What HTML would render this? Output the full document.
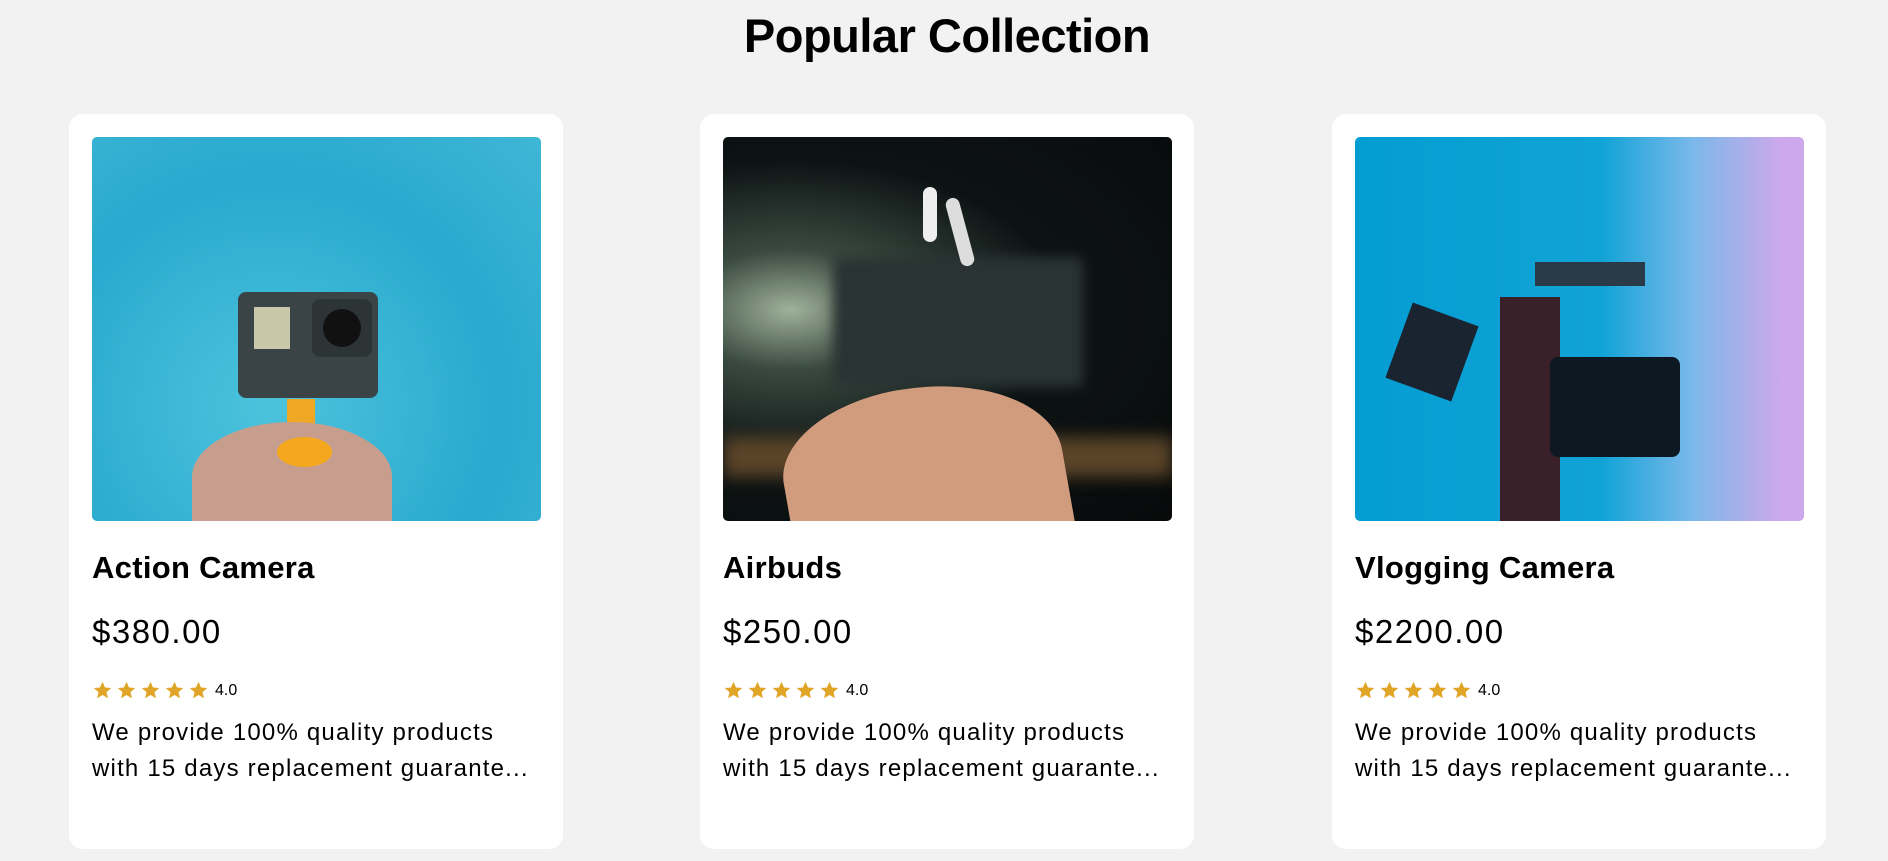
<!DOCTYPE html>
<html><head><style>
*{margin:0;padding:0;box-sizing:border-box}
body{width:1888px;height:861px;background:#f2f2f2;font-family:"Liberation Sans",sans-serif;overflow:hidden;position:relative;color:#000}
h1{position:absolute;top:8px;left:0;width:1894px;text-align:center;font-size:47px;font-weight:bold;letter-spacing:-0.5px}
.card{position:absolute;top:114px;width:494px;height:735px;background:#fff;border-radius:14px}
.img{position:absolute;left:23px;top:23px;width:449px;height:384px;border-radius:5px;overflow:hidden}
.t{position:absolute;left:23px;top:436px;font-size:31px;font-weight:bold;letter-spacing:0.3px}
.p{position:absolute;left:23px;top:499px;font-size:33px;letter-spacing:1.5px}
.s{position:absolute;left:23px;top:566px;font-size:16px;display:flex;align-items:center;gap:3px}
.s svg{width:21px;height:21px}
.d{position:absolute;left:23px;top:601px;font-size:24px;line-height:36px;width:470px;letter-spacing:1.2px;white-space:nowrap}
</style></head><body>
<h1>Popular Collection</h1>

<div class="card" style="left:69px">
 <div class="img" style="background:radial-gradient(ellipse at 40% 70%,#4cc3dc,#29a9cf 60%,#3fb7d6)">
  <div style="position:absolute;left:146px;top:155px;width:140px;height:106px;background:#3a4446;border-radius:8px"></div>
  <div style="position:absolute;left:220px;top:162px;width:60px;height:58px;background:#2c3436;border-radius:8px"></div>
  <div style="position:absolute;left:231px;top:172px;width:38px;height:38px;background:#111;border-radius:50%"></div>
  <div style="position:absolute;left:162px;top:170px;width:36px;height:42px;background:#c8c8a8"></div>
  <div style="position:absolute;left:195px;top:262px;width:28px;height:40px;background:#f0a824"></div>
  <div style="position:absolute;left:100px;top:285px;width:200px;height:110px;background:#c79e8e;border-radius:50% 50% 0 0"></div>
  <div style="position:absolute;left:185px;top:300px;width:55px;height:30px;background:#f5a81e;border-radius:50%"></div>
 </div>
 <div class="t">Action Camera</div><div class="p">$380.00</div>
 <div class="s"></div>
 <div class="d">We provide 100% quality products<br>with 15 days replacement guarante...</div>
</div>

<div class="card" style="left:700px">
 <div class="img" style="background:radial-gradient(ellipse at 15% 45%,#9fb29a 0%,#3a4a40 20%,#0d1314 50%,#080a0a)">
  <div style="position:absolute;left:110px;top:120px;width:250px;height:130px;background:#2a3333;filter:blur(6px)"></div>
  <div style="position:absolute;left:0;top:300px;width:449px;height:40px;background:#5a4428;filter:blur(8px)"></div>
  <div style="position:absolute;left:200px;top:50px;width:14px;height:55px;background:#eee;border-radius:7px"></div>
  <div style="position:absolute;left:230px;top:60px;width:14px;height:70px;background:#ddd;border-radius:7px;transform:rotate(-15deg)"></div>
  <div style="position:absolute;left:60px;top:250px;width:280px;height:160px;background:#d19c7e;border-radius:50% 60% 0 0;transform:rotate(-10deg)"></div>
 </div>
 <div class="t">Airbuds</div><div class="p">$250.00</div>
 <div class="s"></div>
 <div class="d">We provide 100% quality products<br>with 15 days replacement guarante...</div>
</div>

<div class="card" style="left:1332px">
 <div class="img" style="background:linear-gradient(90deg,#049dd2 0%,#11a3d6 55%,#7ab8ea 75%,#cda8ea 95%)">
  <div style="position:absolute;left:180px;top:125px;width:110px;height:24px;background:#2a3a48"></div>
  <div style="position:absolute;left:42px;top:175px;width:70px;height:80px;background:#1a2330;transform:rotate(20deg)"></div>
  <div style="position:absolute;left:145px;top:160px;width:60px;height:224px;background:#3a2028"></div>
  <div style="position:absolute;left:195px;top:220px;width:130px;height:100px;background:#0e1822;border-radius:8px"></div>
 </div>
 <div class="t">Vlogging Camera</div><div class="p">$2200.00</div>
 <div class="s"></div>
 <div class="d">We provide 100% quality products<br>with 15 days replacement guarante...</div>
</div>

<script>
var star='<svg viewBox="0 0 24 24"><path fill="#e0a526" d="M12 2l2.9 6.6 7.1.6-5.4 4.7 1.6 7-6.2-3.7-6.2 3.7 1.6-7L2 9.2l7.1-.6z"/></svg>';
document.querySelectorAll('.s').forEach(function(e){e.innerHTML=star+star+star+star+star+'<span style="margin-left:3px">4.0</span>'});
</script>
</body></html>
